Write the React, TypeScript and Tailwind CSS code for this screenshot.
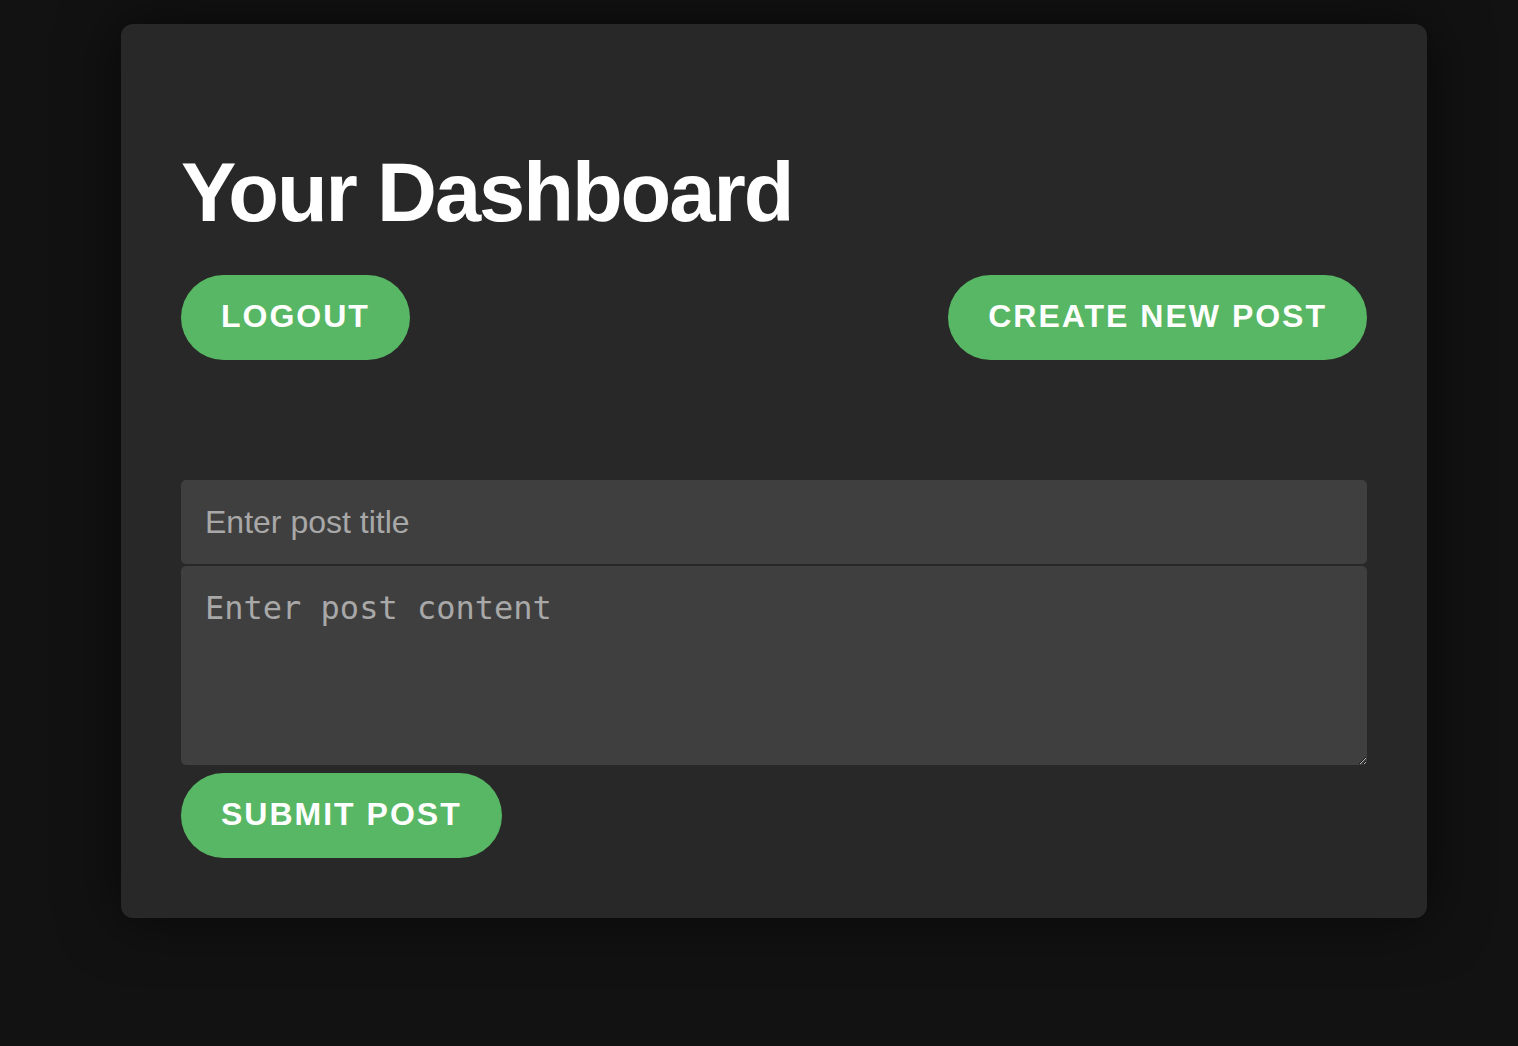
import React from "react";

export default function App() {
  return (
    <div className="min-h-screen w-full bg-[#121212] pt-[24px] pb-[128px]" style={{ fontFamily: '"Liberation Sans", Arial, sans-serif' }}>
      <div className="ml-[121px] w-[1306px] rounded-[12px] bg-[#282828] px-[60px] pt-[58px] pb-[60px] shadow-[0_0_60px_rgba(0,0,0,0.6)]">
        <h1 className="mt-[64px] text-[83px] font-bold leading-[94px] tracking-[-2px] text-white">Your Dashboard</h1>
        <div className="mt-[35px] flex items-center justify-between">
          <button className="h-[85px] rounded-full bg-[#58b764] px-[40px] pb-[3px] text-[32px] font-bold uppercase tracking-[2px] text-white">Logout</button>
          <button className="h-[85px] rounded-full bg-[#58b764] px-[40px] pb-[3px] text-[32px] font-bold uppercase tracking-[2px] text-white">Create New Post</button>
        </div>
        <div className="mt-[120px] flex flex-col">
          <input
            placeholder="Enter post title"
            className="h-[84px] w-full rounded-[5px] bg-[#3f3f3f] px-[24px] text-[32px] text-white placeholder:text-[#a8a8a8] outline-none"
          />
          <textarea
            placeholder="Enter post content"
            className="mt-[2px] block h-[199px] w-full resize-y rounded-[5px] bg-[#3f3f3f] px-[24px] py-[20px] text-[32px] leading-[44px] text-white placeholder:text-[#a8a8a8] outline-none"
            style={{ fontFamily: '"DejaVu Sans Mono", monospace' }}
          />
          <div className="mt-[8px]">
            <button className="h-[85px] rounded-full bg-[#58b764] px-[40px] pb-[3px] text-[32px] font-bold uppercase tracking-[2px] text-white">Submit Post</button>
          </div>
        </div>
      </div>
    </div>
  );
}
